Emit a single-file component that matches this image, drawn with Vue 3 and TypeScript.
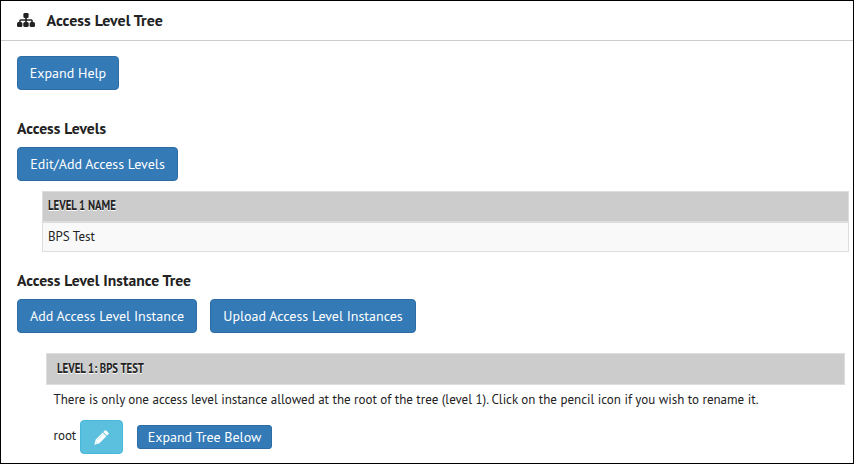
<script setup lang="ts">
const levels: string[] = ['BPS Test']
</script>

<template>
  <main class="page">
    <header class="page-head">
      <svg class="tree-icon" viewBox="0 0 18 14" aria-hidden="true">
        <rect x="6.400" y="0" width="5.200" height="5" rx="1.300" />
        <path d="M8.200 4.500h1.600v1.700h4.500q1.500 0 1.500 1.500v2h-1.500v-2H9.800v2H8.200v-2H3.700v2H2.200v-2q0-1.500 1.500-1.500h4.500z" />
        <rect x="0" y="9" width="5.400" height="5" rx="1.500" />
        <rect x="6.300" y="9" width="5.400" height="5" rx="1.500" />
        <rect x="12.600" y="9" width="5.400" height="5" rx="1.500" />
      </svg>
      <h1 class="title">Access Level Tree</h1>
    </header>

    <section class="help">
      <button class="btn help-btn">Expand Help</button>
    </section>

    <section class="levels">
      <h2 class="heading">Access Levels</h2>
      <button class="btn edit-btn">Edit/Add Access Levels</button>
      <div class="table">
        <div class="table-head"><span class="narrow">LEVEL 1 NAME</span></div>
        <div v-for="level in levels" :key="level" class="table-row">{{ level }}</div>
      </div>
    </section>

    <section class="instances">
      <h2 class="heading">Access Level Instance Tree</h2>
      <div class="actions">
        <button class="btn add-btn">Add Access Level Instance</button>
        <button class="btn upload-btn">Upload Access Level Instances</button>
      </div>
      <div class="panel-head"><span class="narrow">LEVEL 1: BPS TEST</span></div>
      <p class="note">There is only one access level instance allowed at the root of the tree (level 1). Click on the pencil icon if you wish to rename it.</p>
      <div class="root-row">
        <span class="root-name">root</span>
        <button class="btn pencil-btn" aria-label="Rename">
          <svg class="pencil" viewBox="0 0 15 15" aria-hidden="true">
            <path d="M10.500.7q1-1 2 0l1.700 1.700q1 1 0 2l-1.200 1.200L9.300 1.900zM8.700 2.500l3.700 3.700-7 7L.3 14.700l1.400-5.200z" />
            <path class="groove" d="M3.600 9.800l5.600-5.600M1.700 11.800l1.500 1.500" />
          </svg>
        </button>
        <button class="btn expand-btn">Expand Tree Below</button>
      </div>
    </section>
  </main>
</template>

<style>
body {
  margin: 0;
  background: #fff;
}
</style>

<style scoped>
* {
  box-sizing: border-box;
}

.page {
  width: 854px;
  height: 464px;
  overflow: hidden;
  border: 1px solid #000;
  background: #fff;
  color: #222;
  font-family: "PT Sans", "Noto Sans", sans-serif;
  font-size: 13px;
  white-space: nowrap;
}

.page-head {
  display: flex;
  align-items: center;
  height: 40px;
  padding-left: 16px;
  border-bottom: 1px solid #ccc;
}

.tree-icon {
  width: 18px;
  height: 14px;
  margin: 0 11.6px 1px 0;
  fill: #222;
}

.title,
.heading {
  margin: 0;
  font-size: 15.65px;
  font-weight: 600;
  line-height: 20px;
}

.title {
  padding-bottom: 2px;
  font-size: 15.9px;
}

.btn {
  display: flex;
  align-items: center;
  justify-content: center;
  flex: none;
  height: 34px;
  margin: 0;
  padding: 0;
  border: 1px solid #2e6da4;
  border-radius: 4px;
  background: #337ab7;
  color: #fff;
  font: 14px/20px "PT Sans", "Noto Sans", sans-serif;
}

.help {
  padding: 15px 16px 0;
}

.help-btn {
  width: 102px;
}

.levels {
  padding: 28px 4px 0 16px;
}

.edit-btn {
  width: 161px;
  margin-top: 9px;
}

.table {
  width: 807px;
  margin: 10px 0 0 25px;
  border: 1px solid #ddd;
}

.table-head {
  height: 31px;
  padding-left: 5px;
  border-bottom: 2px solid #ddd;
  background: #ccc;
  font-weight: 600;
  line-height: 27px;
  text-shadow: 0 1px 0 #fff;
}

.narrow {
  display: inline-block;
  transform: scaleX(0.83);
  transform-origin: left center;
}

.table-row {
  height: 28px;
  padding-left: 5px;
  background: #f9f9f9;
  line-height: 27px;
}

.instances {
  padding: 18px 8px 0 16px;
}

.actions {
  display: flex;
  gap: 13px;
  margin-top: 9px;
}

.add-btn {
  width: 180px;
}

.upload-btn {
  width: 206px;
}

.panel-head {
  width: 799px;
  height: 32px;
  margin: 20px 0 0 29px;
  padding-left: 10px;
  border: 1px solid #ddd;
  background: #ccc;
  font-weight: 600;
  line-height: 29px;
  text-shadow: 0 1px 0 #fff;
}

.note {
  margin: 5px 0 0 36.5px;
  line-height: 20px;
}

.root-row {
  display: flex;
  align-items: center;
  height: 34px;
  margin: 10px 0 0 36px;
}

.root-name {
  width: 27px;
  padding: 0 0 2px 0.5px;
  line-height: 20px;
}

.pencil-btn {
  width: 43px;
  border-color: #46b8da;
  background: #5bc0de;
}

.pencil {
  width: 15px;
  height: 15px;
  fill: #fff;
}

.groove {
  fill: none;
  stroke: #5bc0de;
  stroke-width: 0.5;
}

.expand-btn {
  width: 135px;
  height: 24px;
  margin-left: 14px;
  border-radius: 3px;
}
</style>
